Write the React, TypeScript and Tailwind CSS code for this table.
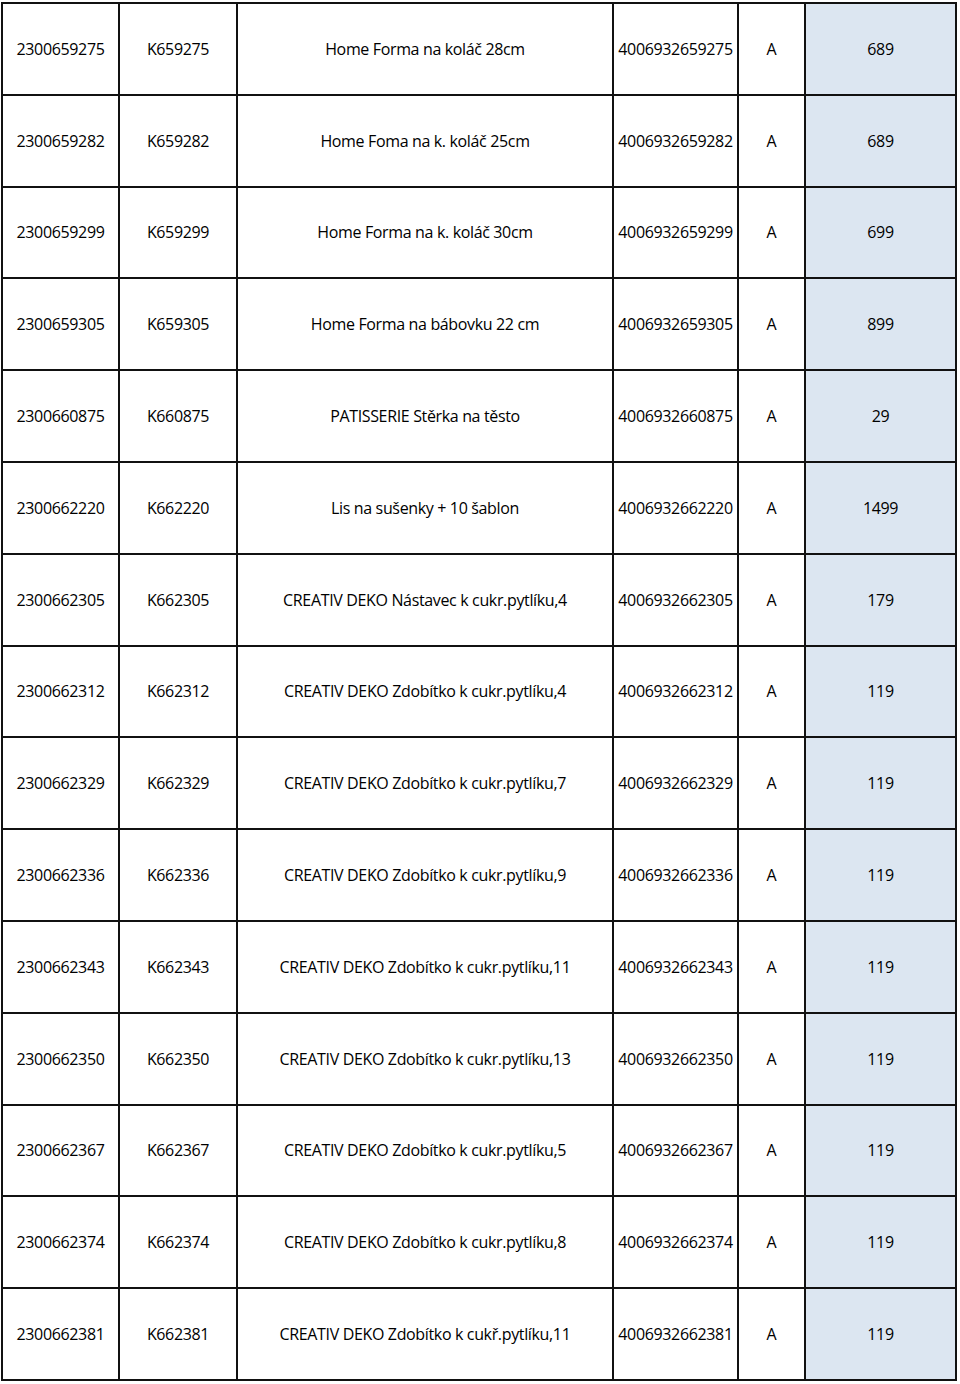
import React from "react";

const rows: [string, string, string, string, string, string][] = [
  ["2300659275", "K659275", "Home Forma na koláč 28cm", "4006932659275", "A", "689"],
  ["2300659282", "K659282", "Home Foma na k. koláč 25cm", "4006932659282", "A", "689"],
  ["2300659299", "K659299", "Home Forma na k. koláč 30cm", "4006932659299", "A", "699"],
  ["2300659305", "K659305", "Home Forma na bábovku 22 cm", "4006932659305", "A", "899"],
  ["2300660875", "K660875", "PATISSERIE Stěrka na těsto", "4006932660875", "A", "29"],
  ["2300662220", "K662220", "Lis na sušenky + 10 šablon", "4006932662220", "A", "1499"],
  ["2300662305", "K662305", "CREATIV DEKO Nástavec k cukr.pytlíku,4", "4006932662305", "A", "179"],
  ["2300662312", "K662312", "CREATIV DEKO Zdobítko k cukr.pytlíku,4", "4006932662312", "A", "119"],
  ["2300662329", "K662329", "CREATIV DEKO Zdobítko k cukr.pytlíku,7", "4006932662329", "A", "119"],
  ["2300662336", "K662336", "CREATIV DEKO Zdobítko k cukr.pytlíku,9", "4006932662336", "A", "119"],
  ["2300662343", "K662343", "CREATIV DEKO Zdobítko k cukr.pytlíku,11", "4006932662343", "A", "119"],
  ["2300662350", "K662350", "CREATIV DEKO Zdobítko k cukr.pytlíku,13", "4006932662350", "A", "119"],
  ["2300662367", "K662367", "CREATIV DEKO Zdobítko k cukr.pytlíku,5", "4006932662367", "A", "119"],
  ["2300662374", "K662374", "CREATIV DEKO Zdobítko k cukr.pytlíku,8", "4006932662374", "A", "119"],
  ["2300662381", "K662381", "CREATIV DEKO Zdobítko k cukř.pytlíku,11", "4006932662381", "A", "119"],
];

const cell =
  "flex items-center justify-center h-[91.8px] border-r-2 border-b-2 border-[#111] whitespace-nowrap overflow-hidden";

export default function App() {
  return (
    <div className="w-[960px] h-[1384px] bg-white pt-[2px] pl-[1px]">
      <div
        className="grid w-[956px] grid-cols-[117px_118px_376px_125px_67px_151px] border-l-2 border-t-2 border-[#111] text-[16px] tracking-[-0.35px] text-black"
        style={{ fontFamily: '"Open Sans", "Noto Sans", sans-serif' }}
      >
        {rows.map((r, i) => (
          <React.Fragment key={i}>
            <div className={cell}>{r[0]}</div>
            <div className={cell}>{r[1]}</div>
            <div className={cell}>{r[2]}</div>
            <div className={cell}>{r[3]}</div>
            <div className={cell}>{r[4]}</div>
            <div className={`${cell} bg-[#dce6f1]`}>{r[5]}</div>
          </React.Fragment>
        ))}
      </div>
    </div>
  );
}
